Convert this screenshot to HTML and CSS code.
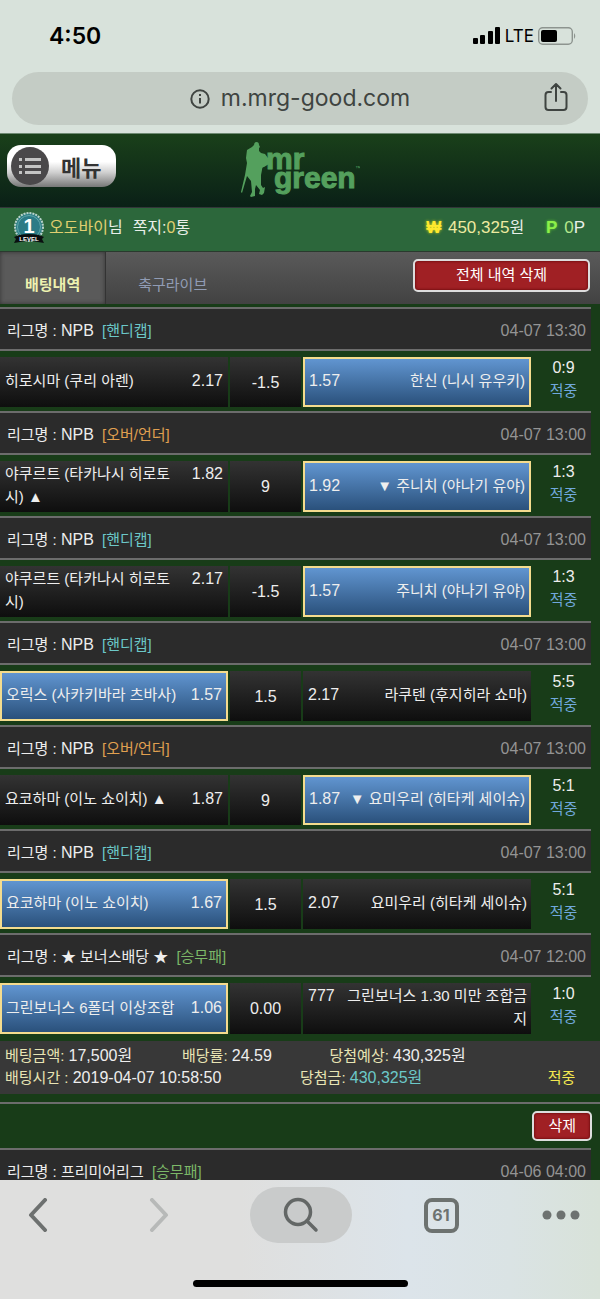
FILE: index.html
```
<!DOCTYPE html>
<html lang="ko">
<head>
  <meta charset="UTF-8">
  <meta name="viewport" content="width=device-width, initial-scale=1.0">
  <title>배팅내역</title>
  <link rel="stylesheet" href="styles.css">
</head>
<body>
  <div class="browser-top">
    <div class="status">
      <span class="clock">4:50</span>
      <div class="signal">
        <svg width="28" height="18" viewBox="0 0 28 18">
          <rect x="0" y="11" width="5" height="6" rx="1"/>
          <rect x="7" y="8" width="5" height="9" rx="1"/>
          <rect x="15" y="4" width="5" height="13" rx="1"/>
          <rect x="22" y="0" width="5" height="17" rx="1"/>
        </svg>
        <span class="lte">LTE</span>
        <svg width="38" height="18" viewBox="0 0 38 18">
          <rect x=".7" y=".7" width="33.6" height="16.6" rx="4" fill="none" stroke="#8d948f" stroke-width="1.4"/>
          <rect x="3" y="3" width="16" height="12" rx="2"/>
          <path d="M36 6 Q38.500 9 36 12z" fill="#8d948f"/>
        </svg>
      </div>
    </div>
    <div class="address">
      <svg class="info" width="20" height="20" viewBox="0 0 20 20" fill="none" stroke="#3f4441" stroke-width="2">
        <circle cx="10" cy="10" r="8.700"/>
        <path d="M10 9v5.500M10 5v2"/>
      </svg>
      <span class="url">m.mrg-good.com</span>
      <button class="share" type="button" aria-label="공유">
        <svg width="24" height="30" viewBox="0 0 24 30" fill="none" stroke="#3f4441" stroke-width="2" stroke-linecap="round" stroke-linejoin="round">
          <path d="M7 10H4.500Q1.500 10 1.500 13v12q0 3 3 3h15q3 0 3-3V13q0-3-3-3H17M12 19V2M7.500 6.500 12 2l4.500 4.500"/>
        </svg>
      </button>
    </div>
  </div>

  <header class="site-header">
    <button class="menu-btn" type="button">
      <svg width="38" height="38" viewBox="0 0 38 38">
        <circle cx="19" cy="19" r="19" fill="#4a484a"/>
        <g fill="#c4c4c4">
          <rect x="8" y="11" width="3" height="3"/><rect x="14" y="11" width="16" height="3"/>
          <rect x="8" y="18" width="3" height="3"/><rect x="14" y="18" width="16" height="3"/>
          <rect x="8" y="24" width="3" height="3"/><rect x="14" y="24" width="16" height="3"/>
        </g>
      </svg>
      메뉴
    </button>
    <a class="logo" href="#" aria-label="mr green">
      <svg width="120" height="56" viewBox="0 0 120 56" fill="#54a05d">
        <path d="M14 3Q14 0 16.500 0T19 3l1 2-1 1v3l2 2 4 1 3 4 1 0v6l-5 3q-2 0-2 3l-1 5v10l2 3 2-1-1 6-2 2-3-1 1-4-4-5-1 4v7l-4 1-1-1 2-4-1-11-4-5-5 17-1-1 4-17 2-12-1-5 1-8 5-3 3-1V6L12 5z"/>
        <text class="logo-text"><tspan x="26" y="27">mr</tspan><tspan x="34" y="46">green</tspan></text>
        <text class="logo-tm" x="115" y="28">™</text>
      </svg>
    </a>
  </header>

  <div class="user-bar">
    <svg width="32" height="32" viewBox="0 0 32 32">
      <circle cx="16" cy="15" r="14" fill="#2e7f86" stroke="#b9d3cb" stroke-width="2" stroke-dasharray="2 1"/>
      <circle cx="16" cy="15" r="11.500" fill="#2b7b86" stroke="#62a8ab"/>
      <text class="badge-num" x="16" y="21" text-anchor="middle">1</text>
      <path d="M1 25l5-2q10-2 20 0l5 2-2 2 2 4-6-1q-9-2-18 0l-6 1 2-4z" fill="#0a0f10"/>
      <text class="badge-label" x="16" y="29" text-anchor="middle">LEVEL</text>
    </svg>
    <div class="user-name"><em>오도바이</em>님</div>
    <div>쪽지:<em>0</em>통</div>
    <div class="money"><b class="won">₩</b> <em class="amount">450,325</em>원</div>
    <div class="points"><b class="pt">P</b> <em class="pt-num">0</em>P</div>
  </div>

  <nav class="tabs">
    <a class="tab active" href="#">배팅내역</a>
    <a class="tab" href="#">축구라이브</a>
    <button class="red-btn delete-all" type="button">전체 내역 삭제</button>
  </nav>

  <main>
    <table class="bets">
      <colgroup><col class="c-team"><col class="c-line"><col class="c-team"><col class="c-result"></colgroup>
      <tbody>
        <tr><th colspan="4"><div class="league"><span>리그명 : <span class="en">NPB</span> <i class="handi">[핸디캡]</i></span><time>04-07 13:30</time></div></th></tr>
        <tr>
          <td class="pick"><div><span>히로시마 (쿠리 아렌)</span><b>2.17</b></div></td>
          <td class="line">-1.5</td>
          <td class="pick away on"><div><b>1.57</b><span>한신 (니시 유우키)</span></div></td>
          <td class="result">0:9<i>적중</i></td>
        </tr>
        <tr><th colspan="4"><div class="league"><span>리그명 : <span class="en">NPB</span> <i class="over">[오버/언더]</i></span><time>04-07 13:00</time></div></th></tr>
        <tr>
          <td class="pick"><div><span>야쿠르트 (타카나시 히로토시) ▲</span><b>1.82</b></div></td>
          <td class="line">9</td>
          <td class="pick away on"><div><b>1.92</b><span>▼ 주니치 (야나기 유야)</span></div></td>
          <td class="result">1:3<i>적중</i></td>
        </tr>
        <tr><th colspan="4"><div class="league"><span>리그명 : <span class="en">NPB</span> <i class="handi">[핸디캡]</i></span><time>04-07 13:00</time></div></th></tr>
        <tr>
          <td class="pick"><div><span>야쿠르트 (타카나시 히로토시)</span><b>2.17</b></div></td>
          <td class="line">-1.5</td>
          <td class="pick away on"><div><b>1.57</b><span>주니치 (야나기 유야)</span></div></td>
          <td class="result">1:3<i>적중</i></td>
        </tr>
        <tr><th colspan="4"><div class="league"><span>리그명 : <span class="en">NPB</span> <i class="handi">[핸디캡]</i></span><time>04-07 13:00</time></div></th></tr>
        <tr>
          <td class="pick on"><div><span>오릭스 (사카키바라 츠바사)</span><b>1.57</b></div></td>
          <td class="line">1.5</td>
          <td class="pick away"><div><b>2.17</b><span>라쿠텐 (후지히라 쇼마)</span></div></td>
          <td class="result">5:5<i>적중</i></td>
        </tr>
        <tr><th colspan="4"><div class="league"><span>리그명 : <span class="en">NPB</span> <i class="over">[오버/언더]</i></span><time>04-07 13:00</time></div></th></tr>
        <tr>
          <td class="pick"><div><span>요코하마 (이노 쇼이치) ▲</span><b>1.87</b></div></td>
          <td class="line">9</td>
          <td class="pick away on"><div><b>1.87</b><span>▼ 요미우리 (히타케 세이슈)</span></div></td>
          <td class="result">5:1<i>적중</i></td>
        </tr>
        <tr><th colspan="4"><div class="league"><span>리그명 : <span class="en">NPB</span> <i class="handi">[핸디캡]</i></span><time>04-07 13:00</time></div></th></tr>
        <tr>
          <td class="pick on"><div><span>요코하마 (이노 쇼이치)</span><b>1.67</b></div></td>
          <td class="line">1.5</td>
          <td class="pick away"><div><b>2.07</b><span>요미우리 (히타케 세이슈)</span></div></td>
          <td class="result">5:1<i>적중</i></td>
        </tr>
        <tr><th colspan="4"><div class="league"><span>리그명 : ★ 보너스배당 ★ <i class="wdl">[승무패]</i></span><time>04-07 12:00</time></div></th></tr>
        <tr>
          <td class="pick on"><div><span>그린보너스 6폴더 이상조합</span><b>1.06</b></div></td>
          <td class="line">0.00</td>
          <td class="pick away"><div><b>777</b><span>그린보너스 1.30 미만 조합금지</span></div></td>
          <td class="result">1:0<i>적중</i></td>
        </tr>
      </tbody>
    </table>

    <div class="summary">
      <div class="sum-row totals">
        <div>베팅금액: <b>17,500원</b></div>
        <div>배당률: <b>24.59</b></div>
        <div>당첨예상: <b>430,325원</b></div>
      </div>
      <div class="sum-row outcome">
        <div>배팅시간 : <b>2019-04-07 10:58:50</b></div>
        <div>당첨금: <b class="win">430,325원</b></div>
        <div class="hit">적중</div>
      </div>
    </div>

    <div class="actions">
      <button class="red-btn" type="button">삭제</button>
    </div>

    <div class="league"><span>리그명 : 프리미어리그 <i class="wdl">[승무패]</i></span><time>04-06 04:00</time></div>
  </main>

  <footer class="toolbar">
    <div class="tools">
      <button type="button" aria-label="뒤로">
        <svg width="20" height="34" viewBox="0 0 20 34" fill="none" stroke="#6d706f" stroke-width="4" stroke-linecap="round" stroke-linejoin="round"><path d="M17 2 3 17l14 15"/></svg>
      </button>
      <button type="button" aria-label="앞으로">
        <svg width="20" height="34" viewBox="0 0 20 34" fill="none" stroke="#b7b9b8" stroke-width="4" stroke-linecap="round" stroke-linejoin="round"><path d="M3 2l14 15L3 32"/></svg>
      </button>
      <button class="search" type="button" aria-label="검색">
        <svg width="36" height="36" viewBox="0 0 36 36" fill="none" stroke="#636766" stroke-width="3.500" stroke-linecap="round"><circle cx="15" cy="15" r="12.500"/><path d="M24 24l9 9"/></svg>
      </button>
      <button class="count" type="button">61</button>
      <button type="button" aria-label="더보기">
        <svg width="38" height="10" viewBox="0 0 38 10" fill="#6d7270"><circle cx="5" cy="5" r="4.500"/><circle cx="19" cy="5" r="4.500"/><circle cx="33" cy="5" r="4.500"/></svg>
      </button>
    </div>
    <div class="home-bar"></div>
  </footer>
</body>
</html>
```
FILE: styles.css
```
* {
  box-sizing: border-box;
}
body {
  margin: 0;
  background-color: #183c18;
  color: #eee;
  font-family: "Liberation Sans", "Noto Sans CJK KR", sans-serif;
  font-size: 15px;
  line-height: 23px;
}
button {
  padding: 0;
  border: none;
  background: none;
  font-family: inherit;
  cursor: pointer;
}
svg {
  display: block;
}
em, i {
  font-style: normal;
}
a {
  text-decoration: none;
}

/* phone and browser bars */
.browser-top {
  padding: 0 12px 8px;
  background-color: #d8e2db;
  border-bottom: 1px solid #6f8a73;
  font-family: Inter, sans-serif;
}
.status {
  display: flex;
  justify-content: space-between;
  align-items: center;
  height: 72px;
  padding: 0 12px 0 37px;
  color: #000;
}
.clock {
  font-size: 23px;
  font-weight: 600;
}
.signal {
  display: flex;
  align-items: center;
  gap: 4px;
}
.lte {
  font-size: 17px;
}
.address {
  position: relative;
  display: flex;
  justify-content: center;
  align-items: center;
  gap: 11px;
  height: 53px;
  border-radius: 27px;
  background-color: #c4ccc5;
  color: #3f4441;
}
.url {
  font-size: 23px;
}
.share {
  position: absolute;
  right: 20px;
  top: 10px;
}

/* site header */
.site-header {
  display: grid;
  grid-template-columns: 1fr auto 1fr;
  align-items: start;
  height: 73px;
  padding: 8px 7px;
  background: linear-gradient(#1a401a, #0a2017);
}
.menu-btn {
  display: flex;
  align-items: center;
  justify-self: start;
  gap: 12px;
  height: 42px;
  margin-top: 3px;
  padding: 0 15px 0 4px;
  border-radius: 14px;
  background: linear-gradient(#fff 40%, #d0d0d0 65%, #777);
  color: #333;
  font-size: 22px;
  font-weight: bold;
}
.logo-text {
  font-size: 30px;
  font-weight: bold;
  stroke: #54a05d;
}
.logo-tm {
  font-size: 6px;
}
.user-bar {
  display: flex;
  align-items: center;
  height: 45px;
  padding: 0 15px 4px 13px;
  border-top: 1px solid #33363a;
  border-bottom: 1px solid #2a3a2e;
  background-color: #2c673b;
  font-size: 16px;
  color: #e9efe9;
}
.user-bar em {
  color: #e0cf70;
}
.user-name {
  margin: 0 10px 0 4px;
}
.money {
  margin-left: auto;
}
.points {
  margin-left: 22px;
}
.user-bar .amount {
  color: #eeeaa0;
  font-size: 17px;
}
.points, .user-bar .pt-num {
  font-size: 17px;
}
.user-bar .pt-num {
  color: #b4e88c;
}
.won {
  color: #ffe92e;
  text-shadow: 0 0 3px #d8d820;
}
.pt {
  color: #8cf04a;
  text-shadow: 0 0 3px #60d030;
}
.won, .pt {
  margin-right: 2px;
}
.badge-num {
  fill: #fff;
  font-size: 20px;
  font-weight: bold;
}
.badge-label {
  fill: #fff;
  font-size: 6px;
  font-weight: bold;
}

.tabs {
  display: flex;
  height: 52px;
  background: linear-gradient(#5a5a5a, #424242);
}
.tab {
  padding: 21px 32px 0;
  color: #919cb4;
}
.tab.active {
  padding: 21px 25px 0;
  background-color: #5a5a5a;
  border-right: 1px solid #333;
  box-shadow: inset 0 0 4px #333;
  color: #eef2b0;
  font-weight: bold;
}
.red-btn {
  height: 30px;
  padding: 0 14px 4px;
  border: 2px solid #ddd;
  border-radius: 5px;
  background-color: #a02024;
  box-shadow: inset 0 0 3px #500;
  color: #fff;
  font-size: 15px;
}
.delete-all {
  width: 177px;
  height: 33px;
  margin: 7px 10px 0 auto;
}

/* bet list */
main {
  padding-top: 3px;
}
.bets {
  width: 100%;
  table-layout: fixed;
  border-spacing: 0;
}
.c-team {
  width: 38%;
}
.c-line {
  width: 12.5%;
}
.bets th {
  padding: 0;
  font-weight: normal;
  text-align: left;
}
.league {
  display: flex;
  justify-content: space-between;
  margin-right: 9px;
  padding: 3px 5px 0 7px;
  border: solid #6c6c6c;
  border-width: 2px 0;
  background-color: #2b2b2b;
  line-height: 37px;
}
.league i {
  margin-left: 4px;
}
.league time {
  color: #949494;
  font-size: 16px;
}
.en {
  font-size: 16px;
}
.handi {
  color: #6cc8c8;
}
.over {
  color: #e0a050;
}
.wdl {
  color: #7cb868;
}
.bets td {
  height: 60px;
  padding: 0;
  border: solid transparent;
  border-width: 6px 0 4px;
}
.bets .pick, .bets .line {
  background: linear-gradient(#333, #0e0e0e) padding-box;
}
.bets .line {
  border-left-width: 2px;
  border-right-width: 2px;
  text-align: center;
  font-size: 16px;
}
.bets .pick {
  padding: 1px 5px 4px;
}
.bets .away {
  padding-right: 4px;
}
.bets .on {
  padding-left: 6px;
  padding-right: 6px;
  background: linear-gradient(#6398d4, #284e78) padding-box;
  box-shadow: inset 0 0 0 2px #f4dc8e;
}
.pick div {
  display: flex;
  justify-content: space-between;
  gap: 10px;
}
.away div {
  gap: 6px;
}
.pick b {
  font-size: 16px;
  font-weight: normal;
}
.away span {
  text-align: right;
}
.bets .result {
  padding-right: 4px;
  border-top-width: 5px;
  vertical-align: top;
  text-align: center;
  font-size: 16px;
}
.result i {
  display: block;
  color: #70a8dc;
  font-size: 15px;
}

.summary {
  margin-top: 3px;
  padding: 4px 5px 5px;
  background-color: #383838;
  color: #e8e4b4;
  line-height: 22px;
}
.sum-row {
  display: grid;
}
.totals {
  grid-template-columns: 30% 25% 1fr;
}
.outcome {
  grid-template-columns: 50% 42% 1fr;
}
.summary b {
  color: #eee;
  font-size: 16px;
  font-weight: normal;
}
.summary .win {
  color: #6cc8c8;
}
.hit {
  color: #f4e850;
}
.actions {
  display: flex;
  justify-content: flex-end;
  margin-top: 8px;
  padding: 7px 8px;
  border-top: 2px solid #6c6c6c;
}

.toolbar {
  position: fixed;
  left: 0;
  right: 0;
  bottom: 0;
  height: 119px;
  padding-top: 7px;
  background: linear-gradient(90deg, #dfdfde 40%, #dce4ea 68%, #dae3e4 85%, #d8e2d9);
}
.tools {
  display: grid;
  grid-template-columns: 76fr 166fr 118fr 162fr 78fr;
  justify-items: center;
  align-items: center;
}
.search {
  display: flex;
  justify-content: center;
  align-items: center;
  width: 102px;
  height: 56px;
  border-radius: 28px;
  background-color: #c9cbcb;
}
.count {
  width: 35px;
  height: 35px;
  border: 4px solid #6d7270;
  border-radius: 8px;
  color: #6d7270;
  font: bold 16px Inter, sans-serif;
}
.home-bar {
  width: 215px;
  height: 7px;
  margin: 37px auto 0;
  border-radius: 4px;
  background-color: #000;
}
```
